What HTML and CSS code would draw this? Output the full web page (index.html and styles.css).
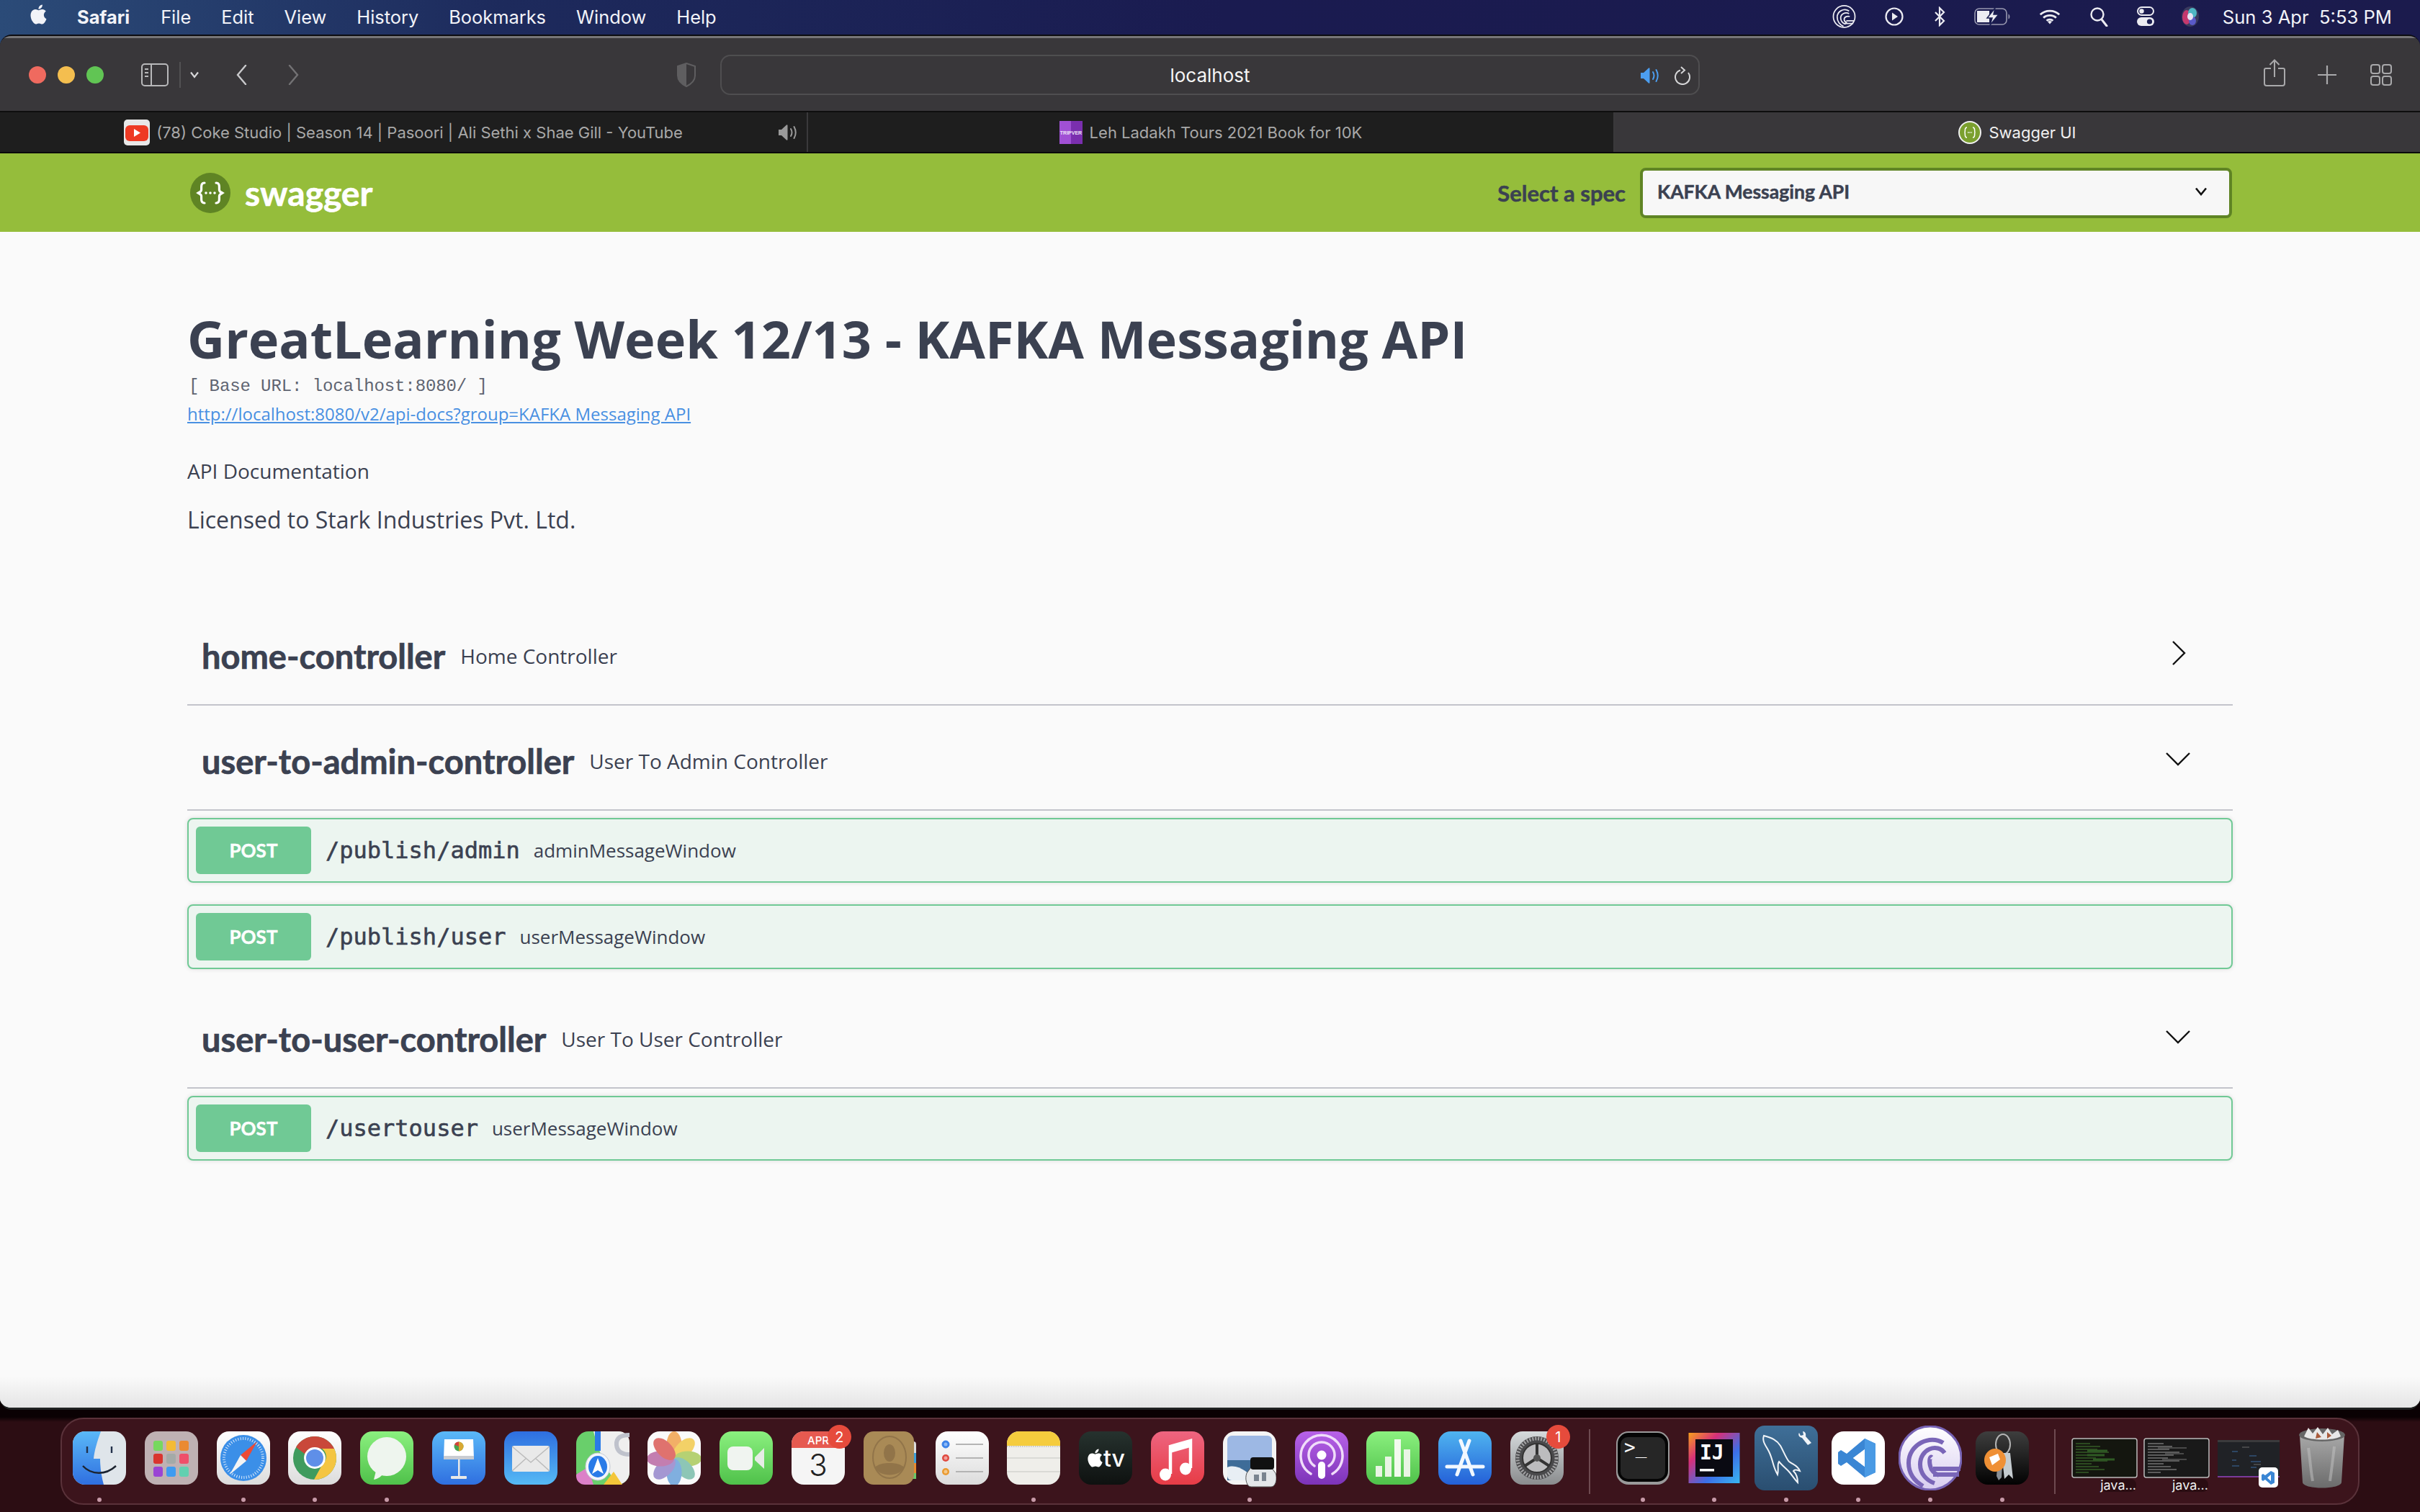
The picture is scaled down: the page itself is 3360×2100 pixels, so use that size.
FILE: index.html
```html
<!DOCTYPE html>
<html lang="en">
<head>
<meta charset="utf-8">
<title>Swagger UI</title>
<link rel="stylesheet" href="styles.css">
</head>
<body>
<svg class="defs" width="0" height="0" aria-hidden="true">
  <defs>
    <linearGradient id="gBlue" x1="0" y1="0" x2="0" y2="1"><stop offset="0" stop-color="#5ab8f8"/><stop offset="1" stop-color="#2f6fe0"/></linearGradient>
    <linearGradient id="gMail" x1="0" y1="0" x2="0" y2="1"><stop offset="0" stop-color="#2e6ee0"/><stop offset="1" stop-color="#56baf5"/></linearGradient>
    <linearGradient id="gGreen" x1="0" y1="0" x2="0" y2="1"><stop offset="0" stop-color="#8bf07f"/><stop offset="1" stop-color="#4fc14a"/></linearGradient>
    <linearGradient id="gWhite" x1="0" y1="0" x2="0" y2="1"><stop offset="0" stop-color="#ffffff"/><stop offset="1" stop-color="#dcdcdc"/></linearGradient>
    <linearGradient id="gMusic" x1="0" y1="0" x2="0" y2="1"><stop offset="0" stop-color="#ee6580"/><stop offset="1" stop-color="#e73c46"/></linearGradient>
    <linearGradient id="gPod" x1="0" y1="0" x2="0" y2="1"><stop offset="0" stop-color="#b862e8"/><stop offset="1" stop-color="#7c33b8"/></linearGradient>
    <linearGradient id="gTv" x1="0" y1="0" x2="0" y2="1"><stop offset="0" stop-color="#26322e"/><stop offset="1" stop-color="#0e1110"/></linearGradient>
    <linearGradient id="gStore" x1="0" y1="0" x2="0" y2="1"><stop offset="0" stop-color="#4fb4f0"/><stop offset="1" stop-color="#2460d8"/></linearGradient>
    <linearGradient id="gPref" x1="0" y1="0" x2="0" y2="1"><stop offset="0" stop-color="#d6dadc"/><stop offset="1" stop-color="#8a8c8e"/></linearGradient>
    <linearGradient id="gKey" x1="0" y1="0" x2="0" y2="1"><stop offset="0" stop-color="#3e3e3e"/><stop offset="1" stop-color="#020202"/></linearGradient>
    <linearGradient id="gIj" x1="0" y1="0" x2="1" y2="1"><stop offset="0" stop-color="#f9a01c"/><stop offset=".3" stop-color="#d6307a"/><stop offset=".65" stop-color="#3c6fe8"/><stop offset="1" stop-color="#38b8f0"/></linearGradient>
    <linearGradient id="gSql" x1="0" y1="0" x2="0" y2="1"><stop offset="0" stop-color="#3f6f98"/><stop offset="1" stop-color="#2a4e70"/></linearGradient>
    <linearGradient id="gBt" x1="0" y1="0" x2="0" y2="1"><stop offset="0" stop-color="#ffffff"/><stop offset="1" stop-color="#d8cdf0"/></linearGradient>
    <linearGradient id="gTrash" x1="0" y1="0" x2="0" y2="1"><stop offset="0" stop-color="#a8a8a8"/><stop offset="1" stop-color="#6b6b6b"/></linearGradient>
    <symbol id="apple" viewBox="0 0 24 24"><path d="M12.152 6.896c-.948 0-2.415-1.078-3.96-1.04-2.04.027-3.91 1.183-4.961 3.014-2.117 3.675-.546 9.103 1.519 12.09 1.013 1.454 2.208 3.09 3.792 3.039 1.52-.065 2.09-.987 3.935-.987 1.831 0 2.35.987 3.96.948 1.637-.026 2.676-1.48 3.676-2.948 1.156-1.688 1.636-3.325 1.662-3.415-.039-.013-3.182-1.221-3.22-4.857-.026-3.04 2.48-4.494 2.597-4.559-1.429-2.09-3.623-2.324-4.39-2.376-2-.156-3.675 1.09-4.61 1.09zM15.53 3.83c.843-1.012 1.4-2.427 1.245-3.83-1.207.052-2.662.805-3.532 1.818-.78.896-1.454 2.338-1.273 3.714 1.338.104 2.715-.688 3.559-1.701"/></symbol>
    <symbol id="speaker" viewBox="0 0 28 24"><path d="M1 8h4l7-6.500a1 1 0 0 1 1.500.8v19.400a1 1 0 0 1-1.500.8L5 16H1z" fill="currentColor"/><path d="M18 7c1.800 3 1.800 7 0 10M22.500 4c2.800 5 2.800 11 0 16" fill="none" stroke="currentColor" stroke-width="2" stroke-linecap="round"/></symbol>
    <symbol id="brace" viewBox="0 0 56 56"><circle cx="28" cy="28" r="28"/><path d="M20 14c-6 0-4 7-4.500 10S12.500 27 11 28c1.500 1 4 1 4.500 4s-1.500 10 4.500 10M36 14c6 0 4 7 4.500 10s3 3 4.500 4c-1.500 1-4 1-4.500 4s1.500 10-4.500 10" fill="none" stroke="#fff" stroke-width="3.200" stroke-linecap="round"/><circle cx="22" cy="28" r="1.800" fill="#fff"/><circle cx="28" cy="28" r="1.800" fill="#fff"/><circle cx="34" cy="28" r="1.800" fill="#fff"/></symbol>
    <symbol id="swirl" viewBox="0 0 34 34"><circle cx="17" cy="17" r="15.500" fill="none" stroke="currentColor" stroke-width="1.800"/><path d="M24 9C16 4 7 10 7 18c0 6 4 11 9 13M24 13c-5-3-12 0-12 6 0 4 3 8 7 9M25 17c-3-1-8 0-8 4 0 2 2 4 4 5M17 27h13M20 23h11" fill="none" stroke="currentColor" stroke-width="1.800"/></symbol>
  </defs>
</svg>

<div class="desktop">
  <header class="menubar">
    <nav class="menu-left">
      <svg class="menu-apple"><use href="#apple"/></svg>
      <span class="menu-item app">Safari</span>
      <span class="menu-item">File</span>
      <span class="menu-item">Edit</span>
      <span class="menu-item">View</span>
      <span class="menu-item">History</span>
      <span class="menu-item">Bookmarks</span>
      <span class="menu-item">Window</span>
      <span class="menu-item">Help</span>
    </nav>
    <div class="menu-right">
      <div class="menu-status">
        <svg class="st st-bt" viewBox="0 0 34 34"><use href="#swirl"/></svg>
        <svg class="st st-play" viewBox="0 0 30 30"><circle cx="15" cy="15" r="11.500" fill="none" stroke="currentColor" stroke-width="2.200"/><path d="M12 9.500v11l8-5.500z" fill="currentColor"/></svg>
        <svg class="st st-blue" viewBox="0 0 20 28"><path d="M4 8l12 12-6 6V2l6 6L4 20" fill="none" stroke="currentColor" stroke-width="2.200"/></svg>
        <svg class="st st-batt" viewBox="0 0 52 26"><rect x="1" y="2" width="44" height="22" rx="6" fill="none" stroke="currentColor" stroke-width="1.600" opacity=".6"/><path d="M4 5h17v16H4z" fill="currentColor"/><path d="M47.500 9.500c2.500 1 2.500 6 0 7z" fill="currentColor" opacity=".6"/><path d="M29 1L18 15h7l-3 10 12-15h-7z" fill="currentColor" stroke="#1b1f52" stroke-width="1.500"/></svg>
        <svg class="st st-wifi" viewBox="0 0 34 24"><path d="M2 9c8-8 22-8 30 0M7 14c5-5 15-5 20 0M12 18.500c2.500-2.500 7.500-2.500 10 0" fill="none" stroke="currentColor" stroke-width="3.200"/><path d="M17 24l-3.500-4c2-1.500 5-1.500 7 0z" fill="currentColor"/></svg>
        <svg class="st st-search" viewBox="0 0 30 28"><circle cx="13" cy="11" r="8.500" fill="none" stroke="currentColor" stroke-width="2.400"/><path d="M19 18l7 9" stroke="currentColor" stroke-width="3" stroke-linecap="round"/></svg>
        <svg class="st st-cc" viewBox="0 0 24 28"><rect x="1" y="1" width="22" height="11" rx="5.500" fill="none" stroke="currentColor" stroke-width="2"/><circle cx="6.500" cy="6.500" r="3.200" fill="currentColor"/><rect x="0" y="15" width="24" height="12" rx="6" fill="currentColor"/><circle cx="17.500" cy="21" r="3.600" fill="#1b1f52"/></svg>
        <svg class="st st-siri" viewBox="0 0 24 28"><ellipse cx="12" cy="14" rx="12" ry="14" fill="#3a3a5e"/><ellipse cx="7" cy="15" rx="6" ry="10" fill="#c4396e"/><ellipse cx="15" cy="9" rx="6" ry="7" fill="#4fb7c4"/><ellipse cx="15" cy="20" rx="5" ry="6" fill="#5a5ac8"/><ellipse cx="12" cy="14" rx="4" ry="5" fill="#e8e4f4"/></svg>
      </div>
      <time class="clock">Sun 3 Apr&nbsp;&nbsp;5:53 PM</time>
    </div>
  </header>

  <section class="window">
    <div class="titlebar">
      <div class="tb-left">
        <span class="light red"></span><span class="light yellow"></span><span class="light green"></span>
        <svg class="tb-sidebar" viewBox="0 0 38 32"><rect x="1" y="1" width="36" height="30" rx="4" fill="none" stroke="currentColor" stroke-width="2"/><path d="M14 1v30" stroke="currentColor" stroke-width="2"/><path d="M5 8h5M5 13h5M5 18h5" stroke="currentColor" stroke-width="2"/></svg>
        <span class="tb-sep"></span>
        <svg class="tb-caret" viewBox="0 0 14 10"><path d="M2 1.500l5 6.500 5-6.500" fill="none" stroke="currentColor" stroke-width="2.200"/></svg>
        <svg class="tb-back" viewBox="0 0 16 28"><path d="M14 1L3 14l11 13" fill="none" stroke="currentColor" stroke-width="2.400" stroke-linecap="round"/></svg>
        <svg class="tb-fwd" viewBox="0 0 16 28"><path d="M2 1l11 13L2 27" fill="none" stroke="currentColor" stroke-width="2.400" stroke-linecap="round"/></svg>
        <svg class="tb-shield" viewBox="0 0 26 34"><path d="M13 1l12 4v13c0 7-6 12-12 15C7 30 1 25 1 18V5z" fill="none" stroke="currentColor" stroke-width="2"/><path d="M13 1L1 5v13c0 7 6 12 12 15z" fill="currentColor"/></svg>
      </div>
      <div class="url">
        <span></span>
        <span class="url-text">localhost</span>
        <span class="url-tools">
          <svg class="url-sound"><use href="#speaker"/></svg>
          <svg class="url-reload" viewBox="0 0 24 26"><path d="M9 5.500A10 10 0 1 0 20 9" fill="none" stroke="currentColor" stroke-width="2"/><path d="M10 1l5 4.500-5 4.500" fill="none" stroke="currentColor" stroke-width="2"/></svg>
        </span>
      </div>
      <div class="tb-right">
        <svg class="tb-share" viewBox="0 0 30 38"><path d="M10 13H3a2 2 0 0 0-2 2v19a3 3 0 0 0 3 3h22a3 3 0 0 0 3-3V15a2 2 0 0 0-2-2h-7" fill="none" stroke="currentColor" stroke-width="2"/><path d="M15 25V2M8.500 8L15 1.500 21.500 8" fill="none" stroke="currentColor" stroke-width="2"/></svg>
        <svg class="tb-plus" viewBox="0 0 28 28"><path d="M14 1v26M1 14h26" stroke="currentColor" stroke-width="2.200"/></svg>
        <svg class="tb-grid" viewBox="0 0 30 30"><g fill="none" stroke="currentColor" stroke-width="2"><rect x="1" y="1" width="12" height="12" rx="3"/><rect x="17" y="1" width="12" height="12" rx="3"/><rect x="1" y="17" width="12" height="12" rx="3"/><rect x="17" y="17" width="12" height="12" rx="3"/></g></svg>
      </div>
    </div>

    <div class="tabs">
      <div class="tab">
        <span></span>
        <span class="tab-label">
          <svg class="fav fav-yt" viewBox="0 0 36 36"><rect width="36" height="36" rx="5" fill="#e8e8e8"/><rect x="2" y="8" width="32" height="22" rx="6" fill="#ee3a24"/><path d="M14 13v11l9-5.500z" fill="#fff"/></svg>
          (78) Coke Studio | Season 14 | Pasoori | Ali Sethi x Shae Gill - YouTube
        </span>
        <svg class="tab-sound"><use href="#speaker"/></svg>
      </div>
      <div class="tab">
        <span></span>
        <span class="tab-label">
          <svg class="fav" viewBox="0 0 32 32"><rect width="32" height="32" fill="#7a2fae"/><rect width="16" height="32" fill="#a050d4"/><text class="fav-text" x="16" y="19" text-anchor="middle">TRIPVER</text></svg>
          Leh Ladakh Tours 2021 Book for 10K
        </span>
        <span></span>
      </div>
      <div class="tab active">
        <span></span>
        <span class="tab-label">
          <svg class="fav" viewBox="0 0 32 32"><circle cx="16" cy="16" r="15" fill="#7ba02f" stroke="#f0f0f0" stroke-width="2"/><path d="M12 9c-4 0-2 5-3 7 1 2-1 7 3 7M20 9c4 0 2 5 3 7-1 2 1 7-3 7" fill="none" stroke="#fff" stroke-width="1.500"/><path d="M13 16h6" stroke="#fff" stroke-width="1.500" stroke-dasharray="1.500 1"/></svg>
          Swagger UI
        </span>
        <span></span>
      </div>
    </div>

    <div class="page">
      <div class="topbar">
        <div class="brand">
          <svg class="brand-logo"><use href="#brace"/></svg>
          <span class="brand-name">swagger</span>
        </div>
        <div class="spec">
          <span class="spec-label">Select a spec</span>
          <div class="spec-select">
            <span>KAFKA Messaging API</span>
            <svg class="spec-caret" viewBox="0 0 18 12"><path d="M2 1.500l7 8.500 7-8.500" fill="none" stroke="#111" stroke-width="2.600"/></svg>
          </div>
        </div>
      </div>

      <main class="content">
        <section class="info">
          <h1 class="title">GreatLearning Week 12/13 - KAFKA Messaging API</h1>
          <pre class="base-url">[ Base URL: localhost:8080/ ]</pre>
          <a class="doc-link" href="#">http://localhost:8080/v2/api-docs?group=KAFKA Messaging API</a>
          <p class="desc">API Documentation</p>
          <p class="license">Licensed to Stark Industries Pvt. Ltd.</p>
        </section>

        <section class="tag-group">
          <h3 class="tag">
            <span class="tag-name">home-controller</span><span class="tag-desc">Home Controller</span>
            <svg class="arrow arrow-right" viewBox="0 0 20 36"><path d="M2 2l16 16L2 34" fill="none" stroke="#111" stroke-width="2.400"/></svg>
          </h3>
        </section>

        <section class="tag-group">
          <h3 class="tag">
            <span class="tag-name">user-to-admin-controller</span><span class="tag-desc">User To Admin Controller</span>
            <svg class="arrow arrow-down" viewBox="0 0 36 20"><path d="M2 2l16 16L34 2" fill="none" stroke="#111" stroke-width="2.400"/></svg>
          </h3>
          <div class="op"><span class="method">POST</span><span class="path">/publish/admin</span><span class="summary">adminMessageWindow</span></div>
          <div class="op"><span class="method">POST</span><span class="path">/publish/user</span><span class="summary">userMessageWindow</span></div>
        </section>

        <section class="tag-group">
          <h3 class="tag">
            <span class="tag-name">user-to-user-controller</span><span class="tag-desc">User To User Controller</span>
            <svg class="arrow arrow-down" viewBox="0 0 36 20"><path d="M2 2l16 16L34 2" fill="none" stroke="#111" stroke-width="2.400"/></svg>
          </h3>
          <div class="op"><span class="method">POST</span><span class="path">/usertouser</span><span class="summary">userMessageWindow</span></div>
        </section>
      </main>
    </div>
  </section>

  <footer class="dock">
    <div class="dock-item"><svg class="ic" viewBox="0 0 74 74"><rect width="74" height="74" rx="17" fill="#dfe5ea"/><path d="M17 0h22c-5 14-9 27-10 38h9c0 13 2 25 5 36H17A17 17 0 0 1 0 57V17A17 17 0 0 1 17 0z" fill="url(#gBlue)"/><path d="M20 21v9M54 21v9" stroke="#22304a" stroke-width="2.400"/><path d="M14 48c12 13 32 13 46 0" fill="none" stroke="#1c2430" stroke-width="2.400"/></svg><i class="dot"></i></div>
    <div class="dock-item"><svg class="ic" viewBox="0 0 74 74"><rect width="74" height="74" rx="17" fill="#bfb1b3"/><rect x="12" y="13" width="13" height="14" rx="3" fill="#76d85e"/><rect x="30" y="13" width="13" height="14" rx="3" fill="#f3bb35"/><rect x="48" y="13" width="13" height="14" rx="3" fill="#ea8a32"/><rect x="12" y="31" width="13" height="14" rx="3" fill="#d9352f"/><rect x="30" y="31" width="13" height="14" rx="3" fill="#a4aaa8"/><rect x="48" y="31" width="13" height="14" rx="3" fill="#ef4f6a"/><rect x="12" y="49" width="13" height="14" rx="3" fill="#9a44d4"/><rect x="30" y="49" width="13" height="14" rx="3" fill="#3f9bf0"/><rect x="48" y="49" width="13" height="14" rx="3" fill="#62d0b0"/></svg></div>
    <div class="dock-item"><svg class="ic" viewBox="0 0 74 74"><rect width="74" height="74" rx="17" fill="url(#gWhite)"/><circle cx="37" cy="37" r="32" fill="#3b8fe8"/><circle cx="37" cy="37" r="27" fill="none" stroke="#dbeafb" stroke-width="4" stroke-dasharray="1 2.400"/><path d="M56 14L33 33l8 8z" fill="#ec4a35"/><path d="M18 60l15-27 8 8z" fill="#f4f4f4"/></svg><i class="dot"></i></div>
    <div class="dock-item"><svg class="ic" viewBox="0 0 74 74"><rect width="74" height="74" rx="17" fill="url(#gWhite)"/><circle cx="37" cy="37" r="30" fill="#3f9b5e"/><path d="M11 22A30 30 0 0 1 64 24H37a13 13 0 0 0-13 8z" fill="#c9483a"/><path d="M64 24A30 30 0 0 1 36 67l12-22a13 13 0 0 0-1-21z" fill="#f4c542"/><circle cx="37" cy="37" r="15" fill="#fff"/><circle cx="37" cy="37" r="12" fill="#5f8fe8"/></svg><i class="dot"></i></div>
    <div class="dock-item"><svg class="ic" viewBox="0 0 74 74"><rect width="74" height="74" rx="17" fill="url(#gGreen)"/><ellipse cx="37" cy="35" rx="27" ry="27" fill="#eef5ee"/><path d="M22 55l-3 12c6-1 11-5 14-9z" fill="#eef5ee"/></svg><i class="dot"></i></div>
    <div class="dock-item"><svg class="ic" viewBox="0 0 74 74"><rect width="74" height="74" rx="17" fill="url(#gBlue)"/><path d="M17 11h40l1 27H16z" fill="#fff"/><rect x="16" y="34" width="42" height="5" fill="#c9ccd2"/><circle cx="37" cy="21" r="6.500" fill="#47a34f"/><path d="M37 14.500a6.500 6.500 0 0 1 0 13z" fill="#d9a832"/><path d="M37 21v-6.500a6.500 6.500 0 0 0-6 4z" fill="#d4423c"/><rect x="36" y="39" width="2.500" height="24" fill="#e8e8e8"/><rect x="26" y="62" width="22" height="4" rx="1" fill="#e8e8e8"/></svg></div>
    <div class="dock-item"><svg class="ic" viewBox="0 0 74 74"><rect width="74" height="74" rx="17" fill="url(#gMail)"/><rect x="11" y="20" width="52" height="36" rx="3" fill="#e9e9e9"/><path d="M11 21l26 22 26-22M11 55l20-18M63 55L43 37" fill="none" stroke="#bcbcbc" stroke-width="1.500"/></svg></div>
    <div class="dock-item"><svg class="ic" viewBox="0 0 74 74"><rect width="74" height="74" rx="17" fill="#69cf6b"/><path d="M50 0h9A15 15 0 0 1 74 15v42A17 17 0 0 1 57 74H56C44 55 32 32 24 0z" fill="#efefef"/><path d="M26 0h8v27h-8z" fill="#2a7be8"/><path d="M74 5c-12 0-19 4-18 14s9 13 18 13" fill="none" stroke="#bfc2cc" stroke-width="6"/><path d="M0 60l16-10 8 24H12A12 12 0 0 1 0 62z" fill="#dc80c8"/><path d="M38 74l14-18 12 18z" fill="#f4c63a"/><ellipse cx="30" cy="49" rx="17" ry="19" fill="#f4f6fb" stroke="#c5cad4"/><ellipse cx="30" cy="49" rx="13" ry="15" fill="#2a7be8"/><path d="M30 37l-8 22 8-5 8 5z" fill="#fff"/></svg></div>
    <div class="dock-item"><svg class="ic" viewBox="0 0 74 74"><rect width="74" height="74" rx="17" fill="#fafafa"/><g transform="translate(37 38)" opacity=".78"><ellipse cy="-19" rx="10.500" ry="19" fill="#f09a3e"/><ellipse cy="-19" rx="10.500" ry="19" fill="#f2c63e" transform="rotate(45)"/><ellipse cy="-19" rx="10.500" ry="19" fill="#a4c64e" transform="rotate(90)"/><ellipse cy="-19" rx="10.500" ry="19" fill="#6fb8a4" transform="rotate(135)"/><ellipse cy="-19" rx="10.500" ry="19" fill="#5e9ad8" transform="rotate(180)"/><ellipse cy="-19" rx="10.500" ry="19" fill="#8c7cc8" transform="rotate(225)"/><ellipse cy="-19" rx="10.500" ry="19" fill="#b45c9c" transform="rotate(270)"/><ellipse cy="-19" rx="10.500" ry="19" fill="#d84c48" transform="rotate(315)"/></g></svg></div>
    <div class="dock-item"><svg class="ic" viewBox="0 0 74 74"><rect width="74" height="74" rx="17" fill="url(#gGreen)"/><rect x="11" y="21" width="35" height="33" rx="8" fill="#f0f4f0"/><path d="M49 36l13-13v29L49 40z" fill="#e6ece6"/></svg></div>
    <div class="dock-item"><svg class="ic" viewBox="0 0 74 74"><rect width="74" height="74" rx="17" fill="#f5f5f5"/><path d="M0 23V17A17 17 0 0 1 17 0h40a17 17 0 0 1 17 17v6z" fill="#e65a50"/><text class="cal-mon" x="37" y="18" text-anchor="middle">APR</text><text class="cal-day" x="37" y="62" text-anchor="middle">3</text></svg><b class="badge">2</b></div>
    <div class="dock-item"><svg class="ic" viewBox="0 0 74 74"><rect x="60" y="14" width="13" height="50" rx="4" fill="#dcdcdc"/><rect x="66" y="30" width="7" height="14" fill="#3e9fd8"/><rect x="66" y="44" width="7" height="14" fill="#e88a30"/><rect x="66" y="58" width="7" height="8" fill="#6ac868"/><rect width="70" height="74" rx="14" fill="#a98a56"/><ellipse cx="36" cy="36" rx="23" ry="29" fill="none" stroke="#917449" stroke-width="2"/><ellipse cx="36" cy="30" rx="8" ry="12" fill="#917449"/><path d="M16 50c6-8 34-8 40 0-6 14-34 14-40 0z" fill="#917449"/></svg></div>
    <div class="dock-item"><svg class="ic" viewBox="0 0 74 74"><rect width="74" height="74" rx="17" fill="url(#gWhite)"/><circle cx="14" cy="18" r="5" fill="#3c82e8" stroke="#3c82e8"/><circle cx="14" cy="18" r="2.500" fill="#8cb8f4"/><circle cx="14" cy="37" r="5" fill="#e04a40"/><circle cx="14" cy="37" r="2.500" fill="#f0a09c"/><circle cx="14" cy="56" r="5" fill="#ea9a30"/><circle cx="14" cy="56" r="2.500" fill="#f4c88a"/><path d="M28 18h38M28 37h38M28 56h38" stroke="#b4b4b4" stroke-width="1.800"/></svg></div>
    <div class="dock-item"><svg class="ic" viewBox="0 0 74 74"><rect width="74" height="74" rx="17" fill="#efeeea"/><path d="M0 20v-3A17 17 0 0 1 17 0h40a17 17 0 0 1 17 17v3z" fill="#f5cc3d"/><path d="M0 21h74" stroke="#c9c9c3" stroke-width="2" stroke-dasharray="1.500 1.500"/><path d="M0 37h74M0 56h74" stroke="#d4d4cf" stroke-width="1.500"/></svg><i class="dot"></i></div>
    <div class="dock-item"><svg class="ic" viewBox="0 0 74 74"><rect width="74" height="74" rx="17" fill="url(#gTv)"/><use href="#apple" x="10" y="22" width="25" height="30" fill="#fff"/><text class="tv" x="34" y="49">tv</text></svg></div>
    <div class="dock-item"><svg class="ic" viewBox="0 0 74 74"><rect width="74" height="74" rx="17" fill="url(#gMusic)"/><path d="M27 21l28-8v38" fill="none" stroke="#fff" stroke-width="4.500"/><path d="M27 19v40" stroke="#fff" stroke-width="4.500"/><path d="M27 21l28-8v9l-28 8z" fill="#fff"/><ellipse cx="20" cy="60" rx="8" ry="8.500" fill="#fff"/><ellipse cx="48" cy="52" rx="8" ry="8.500" fill="#fff"/></svg></div>
    <div class="dock-item"><svg class="ic ic-over" viewBox="0 0 74 78"><rect width="74" height="74" rx="17" fill="#f4f4f4"/><rect x="6" y="6" width="62" height="62" rx="6" fill="#9db8e4"/><path d="M6 40h62v28H6z" fill="#3e6c98"/><path d="M6 50c14-6 30 8 40 18H12a6 6 0 0 1-6-6z" fill="#e8eef4"/><path d="M33 58l6-8h28l6 8c3 8 0 19-6 19H39c-6 0-9-11-6-19z" fill="#e4e7ea" stroke="#555" stroke-width="1"/><rect x="38" y="36" width="33" height="17" rx="4" fill="#111"/><rect x="43" y="60" width="7" height="9" fill="#7a8490"/><rect x="54" y="57" width="6" height="12" fill="#7a8490"/></svg><i class="dot"></i></div>
    <div class="dock-item"><svg class="ic" viewBox="0 0 74 74"><rect width="74" height="74" rx="17" fill="url(#gPod)"/><g fill="none" stroke="#f0dcfa" stroke-linecap="round"><path d="M22 59A29 29 0 1 1 52 59" stroke-width="3.500"/><path d="M27 48A18 18 0 1 1 47 48" stroke-width="3.500"/></g><circle cx="37" cy="33" r="6.500" fill="#fff"/><rect x="32" y="42" width="10" height="24" rx="5" fill="#fff"/></svg></div>
    <div class="dock-item"><svg class="ic" viewBox="0 0 74 74"><rect width="74" height="74" rx="17" fill="url(#gGreen)"/><rect x="13" y="48" width="9" height="15" fill="#e9f5e4"/><rect x="26" y="35" width="9" height="28" fill="#e9f5e4"/><rect x="39" y="11" width="9" height="52" fill="#f2faee"/><rect x="52" y="25" width="9" height="38" fill="#e9f5e4"/></svg></div>
    <div class="dock-item"><svg class="ic" viewBox="0 0 74 74"><rect width="74" height="74" rx="17" fill="url(#gStore)"/><path d="M43 13L26 60M31 13l17 47M12 49h50" stroke="#f2f8ff" stroke-width="5" stroke-linecap="round" fill="none"/></svg></div>
    <div class="dock-item"><svg class="ic" viewBox="0 0 74 74"><rect width="74" height="74" rx="17" fill="url(#gPref)"/><circle cx="37" cy="37" r="30" fill="#4a4a4c"/><circle cx="37" cy="37" r="27" fill="none" stroke="#a4a4a6" stroke-width="5" stroke-dasharray="2 2"/><circle cx="37" cy="37" r="20" fill="#bcbcbe" stroke="#333" stroke-width="2"/><path d="M37 37V17M37 37L20 48M37 37l17 11" stroke="#333" stroke-width="4"/><circle cx="37" cy="37" r="5" fill="#555"/></svg><b class="badge">1</b></div>
    <span class="dock-sep"></span>
    <div class="dock-item"><svg class="ic" viewBox="0 0 74 74"><rect width="74" height="74" rx="17" fill="#9a9a9a"/><rect x="2" y="2" width="70" height="68" rx="15" fill="#050505"/><rect x="6" y="8" width="62" height="58" rx="10" fill="#262626"/><text class="term" x="11" y="31">&gt;_</text></svg><i class="dot"></i></div>
    <div class="dock-item"><svg class="ic" viewBox="0 0 74 74"><rect x="1.500" y="2" width="71" height="70" fill="url(#gIj)"/><rect x="11" y="11" width="52" height="52" fill="#0a0a12"/><text class="ij" x="17" y="39">IJ</text><rect x="17" y="52" width="20" height="3.500" fill="#fff"/></svg><i class="dot"></i></div>
    <div class="dock-item"><svg class="ic ic-big" viewBox="0 0 88 90"><rect width="88" height="90" rx="14" fill="url(#gSql)"/><path d="M13 14c-3 8 3 14 7 22 6 12 5 20 12 32 2-8-1-14 2-18 5 6 8 8 13 13 4 4 8 11 13 16 0-7-2-12-6-16 2-3 6-1 9 0-3-8-10-9-15-13-4-4-8-15-12-22-5-8-12-11-23-14z" fill="none" stroke="#f0f4f8" stroke-width="2"/><path d="M62 10c-2 3 0 6 4 7l8 10 5-3-8-9c1-4-1-7-4-7l1 5-4 1z" fill="#f0f4f8"/></svg><i class="dot"></i></div>
    <div class="dock-item"><svg class="ic" viewBox="0 0 74 74"><rect width="74" height="74" rx="17" fill="#fff"/><path d="M46 10l15 7v40l-15 7-25-21-8 5-4-3V29l4-3 8 5zM46 25L30 37l16 12z" fill="#3a86d4"/><path d="M46 10l15 7v40l-15 7z" fill="#4a9ae4"/><path d="M46 25L30 37l16 12z" fill="#fff"/></svg><i class="dot"></i></div>
    <div class="dock-item"><svg class="ic ic-big" viewBox="0 0 88 90"><ellipse cx="44" cy="45" rx="43" ry="44" fill="url(#gBt)" stroke="#7763b4" stroke-width="3"/><g fill="none" stroke="#7a66b8" stroke-width="6"><path d="M62 24C44 12 14 26 14 52c0 15 8 25 20 32"/><path d="M64 38c-10-14-34-6-34 16 0 12 8 22 20 26"/><path d="M46 44c-2-2-4 4-2 12 1 6 6 11 12 13"/><path d="M48 68h36M48 60h38"/></g></svg><i class="dot"></i></div>
    <div class="dock-item"><svg class="ic" viewBox="0 0 74 74"><rect width="74" height="74" rx="17" fill="url(#gKey)"/><ellipse cx="38" cy="18" rx="10" ry="14" fill="none" stroke="#b4b4b4" stroke-width="2"/><path d="M36 30h12l4 36-6-6-6 6z" fill="#c5ccd0"/><path d="M32 30h6l-2 34-4 4-3-6z" fill="#8a9096"/><ellipse cx="27" cy="40" rx="15" ry="16" fill="#ef9035"/><path d="M19 36l12-5 3 8-11 8z" fill="#fff"/></svg><i class="dot"></i></div>
    <span class="dock-sep sep2"></span>
    <div class="dock-thumb thumb-first">
      <svg class="thumb" viewBox="0 0 92 56"><rect x="1" y="1" width="90" height="54" rx="3" fill="#14160f" stroke="#bbb" stroke-width="1.500"/><path d="M6 8h20M6 12h34M6 16h30M6 20h46M6 24h36M6 28h28M6 32h44M6 36h22M6 40h32M6 44h40M6 48h18" stroke="#2c4a20" stroke-width="1.800"/><path d="M22 18h28M22 24h24M30 30h30" stroke="#2f5a24" stroke-width="3"/></svg>
      <span class="thumb-tag">java...</span>
    </div>
    <div class="dock-thumb">
      <svg class="thumb" viewBox="0 0 92 56"><rect x="1" y="1" width="90" height="54" rx="3" fill="#191919" stroke="#bbb" stroke-width="1.500"/><path d="M6 8h22M6 12h34M6 16h30M6 20h44M6 24h36M6 28h28M6 32h44M6 36h22M6 40h32M6 44h40M6 48h18" stroke="#5c5c5c" stroke-width="1.800"/><path d="M20 14h40M30 22h26M26 30h34" stroke="#484848" stroke-width="2"/></svg>
      <span class="thumb-tag">java...</span>
    </div>
    <div class="dock-thumb dock-thumb-code">
      <svg class="thumb-code" viewBox="0 0 86 66"><rect x="0" y="0" width="86" height="52" fill="#202226"/><rect y="0" width="86" height="3" fill="#3a3a3c"/><rect y="50" width="86" height="2" fill="#7a3a9a"/><path d="M20 16h8M20 28h6M20 36h10M44 22h10M46 30h14M46 38h8" stroke="#3a6aa0" stroke-width="1.200"/><path d="M34 10h10M50 34h10" stroke="#6a6a6a" stroke-width="1.200"/><rect x="57" y="38" width="27" height="28" rx="5" fill="#fff"/><path d="M74 43l5 2.500v14L74 62l-8-7-3 2-2-1.500v-7l2-1.500 3 2zM74 48l-5 4.500 5 4.500z" fill="#3a86d4"/></svg>
    </div>
    <div class="dock-trash"><svg class="trash" viewBox="0 0 66 86"><path d="M2 12c8 6 54 6 62 0l-4 66c-2 10-52 10-54 0z" fill="url(#gTrash)"/><ellipse cx="33" cy="12" rx="32" ry="9" fill="#666"/><path d="M8 14l6-12 6 8 7-9 7 10 7-9 6 9 8-6 4 9c-10 6-42 6-51 0z" fill="#e8e8e8"/><path d="M26 8l6 7-8 2zM40 8l6 5-6 4z" fill="#a85a3a"/><path d="M14 30c3 20 3 30 6 46M50 28c-2 18-4 34-6 48" stroke="#c4c4c4" stroke-width="4" opacity=".5" fill="none"/></svg></div>
  </footer>
</div>
</body>
</html>
```
FILE: styles.css
```css
* { box-sizing: border-box; }
html, body { margin: 0; padding: 0; }
body { width: 3360px; height: 2100px; overflow: hidden; font-family: "Open Sans", "Liberation Sans", sans-serif; }
.defs { position: absolute; }

.desktop {
  width: 3360px; height: 2100px; display: flex; flex-direction: column;
  background:
    linear-gradient(90deg, #2b4b78 0, #1d2a5c 700px, #1a1b50 1700px, #1b1b4d 3360px) top / 100% 70px no-repeat,
    linear-gradient(180deg, #0a0103 0, #0a0103 1968px, #2c0d13 1975px, #2c0d13 2100px);
}

/* menu bar */
.menubar { height: 48px; flex: none; display: flex; justify-content: space-between; align-items: center; padding: 0 39px 2px 40px; color: #f2f3f8; }
.menu-left { display: flex; align-items: center; gap: 42px; font: 400 25.4px "Inter", "Liberation Sans", sans-serif; }
.menu-apple { width: 27px; height: 32px; fill: #f2f3f8; margin: -6px -2px 0 0; }
.menu-item { white-space: nowrap; }
.menu-item.app { font-weight: 700; margin-right: 1px; }
.menu-right { display: flex; align-items: center; gap: 33px; }
.menu-status { display: flex; align-items: center; gap: 38px; }
.st { display: block; color: #ececf2; }
.st-bt { width: 33px; height: 34px; }
.st-play { width: 30px; height: 30px; }
.st-blue { width: 20px; height: 28px; }
.st-batt { width: 52px; height: 26px; }
.st-wifi { width: 30px; height: 24px; }
.st-search { width: 30px; height: 28px; }
.st-cc { width: 24px; height: 28px; }
.st-siri { width: 24px; height: 28px; }
.clock { font: 400 25.6px "Inter", "Liberation Sans", sans-serif; white-space: nowrap; }

/* window */
.window { flex: none; height: 1910px; display: flex; flex-direction: column; border-radius: 16px; overflow: hidden; background: #39373a; border-top: 2px solid #0c0c10; border-bottom: 3px solid #1f2221; position: relative; }
.titlebar { height: 106px; flex: none; display: flex; align-items: center; background: #39373a; border-top: 3px solid #777678; border-bottom: 2px solid #0e0e0e; color: #c9c9cb; }
.tb-left { width: 1000px; flex: none; display: flex; align-items: center; padding-left: 40px; }
.light { width: 24px; height: 24px; border-radius: 50%; margin-right: 16px; }
.light.red { background: #ef6a5f; }
.light.yellow { background: #f4be4f; }
.light.green { background: #61c554; }
.tb-sidebar { width: 38px; height: 32px; margin-left: 36px; color: #b8b8ba; }
.tb-sep { width: 2px; height: 36px; background: #525153; margin-left: 15px; }
.tb-caret { width: 14px; height: 10px; margin-left: 12px; color: #d6d6d8; }
.tb-back { width: 16px; height: 28px; margin-left: 50px; color: #c9c9cb; }
.tb-fwd { width: 16px; height: 28px; margin-left: 57px; color: #737274; }
.tb-shield { width: 26px; height: 34px; margin-left: auto; margin-right: 34px; color: #5f5e60; }
.url { width: 1360px; height: 56px; flex: none; display: grid; grid-template-columns: 1fr auto 1fr; align-items: center; border: 2px solid #4f4e50; border-radius: 14px; padding: 2px 10px 0; }
.url-text { font: 400 26px "Inter", "Liberation Sans", sans-serif; color: #f5f5f5; }
.url-tools { display: flex; justify-content: flex-end; align-items: center; gap: 19px; }
.url-sound { width: 28px; height: 24px; color: #4c9ef0; }
.url-reload { width: 24px; height: 26px; color: #d5d5d7; }
.tb-right { flex: 1; display: flex; justify-content: flex-end; align-items: center; padding-right: 39px; color: #a9a9ab; }
.tb-share { width: 30px; height: 38px; margin-top: -5px; }
.tb-plus { width: 28px; height: 28px; margin-left: 44px; }
.tb-grid { width: 30px; height: 30px; margin-left: 46px; }

.tabs { height: 57px; flex: none; display: grid; grid-template-columns: 1fr 1fr 1fr; background: #1e1e1e; border-bottom: 2px solid #0a0a0a; }
.tab { display: grid; grid-template-columns: 1fr auto 1fr; align-items: center; border-left: 2px solid #3a393b; color: #a8a8a8; min-width: 0; }
.tab:first-child { border-left: 0; }
.tab.active { background: #39373a; color: #f0f0f0; }
.tab-label { display: flex; align-items: center; gap: 10px; font: 400 22px "Inter", "Liberation Sans", sans-serif; white-space: nowrap; }
.fav { width: 32px; height: 32px; flex: none; }
.fav-yt { width: 36px; height: 36px; margin-right: -1px; }
.fav-text { font: 700 7px "Liberation Sans", sans-serif; fill: #f0e6f8; }
.tab-sound { width: 28px; height: 24px; justify-self: end; margin-right: 12px; color: #9a9a9a; }

/* swagger page */
.page { flex: 1; background: #fafafa; display: flex; flex-direction: column; position: relative; min-height: 0; }
.page::after { content: ""; position: absolute; left: 0; right: 0; bottom: 0; height: 44px; background: linear-gradient(180deg, rgba(224,224,224,0), #e4e4e4); pointer-events: none; }
.topbar { height: 109px; flex: none; background: #95bd3b; display: flex; align-items: center; justify-content: space-between; padding: 0 261px 0 264px; }
.brand { display: flex; align-items: center; gap: 20px; }
.brand-logo { width: 56px; height: 56px; fill: #5f8424; }
.brand-name { font: 700 48px "Lato", sans-serif; color: #fff; -webkit-text-stroke: .6px #fff; }
.spec { display: flex; align-items: center; gap: 20px; }
.spec-label { font: 700 31px "Lato", sans-serif; color: #3b4151; -webkit-text-stroke: .5px #3b4151; }
.spec-select { width: 822px; height: 70px; display: flex; align-items: center; justify-content: space-between; background: #f7f7f7; border: 4px solid #5f8424; border-radius: 8px; padding: 0 30px 4px 20px; font: 700 26.5px "Lato", sans-serif; color: #3b4151; }
.spec-select span { -webkit-text-stroke: .5px #3b4151; }
.spec-caret { width: 18px; height: 12px; }

.content { padding: 0 260px; color: #3b4151; }
.info { margin-top: 98px; height: 414px; }
.title { margin: 0; font: 700 72px/100px "Open Sans", sans-serif; color: #3b4151; white-space: nowrap; }
.base-url { margin: 2px 0 0; font: 400 24px/30px "Liberation Mono", monospace; color: #5f6471; padding-left: 2px; letter-spacing: -.1px; }
.doc-link { display: block; margin-top: 6px; font: 400 24px/34px "Open Sans", sans-serif; color: #4990e2; text-decoration: underline; }
.desc { margin: 42px 0 0; font: 400 28px/40px "Open Sans", sans-serif; }
.license { margin: 28px 0 0; font: 400 32px/40px "Open Sans", sans-serif; }

.tag-group + .tag-group + .tag-group { margin-top: 20px; }
.tag { margin: 0; height: 146px; display: flex; align-items: center; padding: 10px 0 0 20px; border-bottom: 2px solid #c3c4cb; }
.tag-name { font: 700 47px "Lato", sans-serif; color: #3b4151; -webkit-text-stroke: .7px #3b4151; }
.tag-desc { margin-left: 21px; font: 400 28px "Open Sans", sans-serif; color: #3b4151; }
.arrow { margin-left: auto; display: block; margin-top: -8px; }
.arrow-right { width: 20px; height: 36px; margin-right: 65px; }
.arrow-down { width: 36px; height: 20px; margin-right: 58px; margin-top: -6px; }

.op { height: 90px; margin-top: 10px; display: flex; align-items: center; background: #ecf5f0; border: 2px solid #70c995; border-radius: 8px; padding: 0 10px; box-shadow: 0 0 6px rgba(0,0,0,.12); }
.op + .op { margin-top: 30px; }
.method { width: 160px; height: 66px; display: flex; align-items: center; justify-content: center; background: #70c995; border-radius: 6px; color: #fff; font: 700 26px "Lato", sans-serif; -webkit-text-stroke: .4px #fff; }
.path { margin-left: 20px; font: 400 32px "DejaVu Sans Mono", "Liberation Mono", monospace; color: #3b4151; -webkit-text-stroke: .6px #3b4151; }
.summary { margin-left: 19px; font: 400 26px "Open Sans", sans-serif; color: #3b4151; }

/* dock */
.dock { margin: 11px 0 0 84px; width: 3192px; height: 121px; flex: none; display: flex; align-items: flex-start; gap: 25.8px; padding: 17px 0 0 15px; background: #3c141c; border: 2px solid #5a323a; border-radius: 32px; }
.dock-item { position: relative; width: 74px; flex: none; display: flex; flex-direction: column; align-items: center; }
.ic { width: 74px; height: 74px; display: block; flex: none; }
.ic-over { height: 78px; margin-bottom: -4px; }
.ic-big { width: 88px; height: 90px; margin: -8px -7px; }
.cal-mon { font: 500 15px "Inter", sans-serif; fill: #fff; }
.cal-day { font: 300 42px "Inter", sans-serif; fill: #222; }
.tv { font: 500 32px "Inter", sans-serif; fill: #fff; }
.term { font: 400 26px "DejaVu Sans Mono", monospace; fill: #fff; }
.ij { font: 700 28px "DejaVu Sans Mono", monospace; fill: #fff; }
.dot { width: 6px; height: 6px; margin-top: 18px; border-radius: 50%; background: #c79aa8; }
.badge { position: absolute; top: -9px; right: -9px; width: 33px; height: 33px; display: flex; align-items: center; justify-content: center; border-radius: 50%; background: #e64b3c; color: #fff; font: 400 20px "Inter", sans-serif; }
.dock-sep { width: 2px; height: 90px; flex: none; margin: -3px 10px 0 9px; background: #6e4a50; }
.sep2 { margin: -3px -1px 0 10px; }
.dock-thumb { position: relative; width: 92px; flex: none; margin-top: 9px; margin-right: -18px; }
.thumb-first { margin-left: -3px; }
.thumb { width: 92px; height: 56px; display: block; }
.thumb-tag { display: block; width: 50px; margin: 1px 0 0 40px; font: 400 18px/18px "Inter", sans-serif; color: #f0f0f0; background: #2a0d12; border-radius: 8px; text-align: center; white-space: nowrap; }
.dock-thumb-code { width: 86px; margin-left: 3px; margin-right: 0; margin-top: 4px; }
.thumb-code { width: 86px; height: 66px; display: block; margin-top: 8px; }
.dock-trash { flex: none; margin: -7px 0 0 0; }
.trash { width: 66px; height: 86px; display: block; }
```
